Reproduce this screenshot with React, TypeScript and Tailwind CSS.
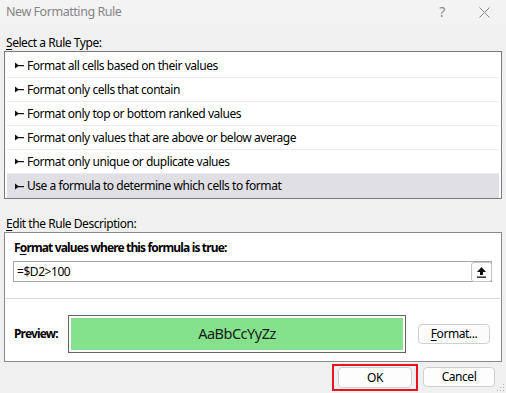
const ruleTypes = [
  'Format all cells based on their values',
  'Format only cells that contain',
  'Format only top or bottom ranked values',
  'Format only values that are above or below average',
  'Format only unique or duplicate values',
  'Use a formula to determine which cells to format',
];

const RowArrow = () => (
  <svg width="10" height="7" viewBox="0 0 10 7" className="shrink-0">
    <polygon points="0,0.5 0,6.5 4,3.5" fill="#111" />
    <rect x="2" y="3" width="7" height="1.2" fill="#111" />
  </svg>
);

const CollapseIcon = () => (
  <svg width="11" height="12" viewBox="0 0 11 12">
    <polygon points="5.5,1 10,6 7,6 7,9 4,9 4,6 1,6" fill="#111" />
    <rect x="1" y="10.5" width="9" height="1.3" fill="#111" />
  </svg>
);

export default function App() {
  return (
    <div className="w-[506px] h-[393px] bg-[#f0f0f0] flex flex-col font-['Segoe_UI','Noto_Sans',sans-serif] text-[12px] tracking-[-0.45px] text-black overflow-hidden relative">
      {/* Title bar */}
      <div className="h-[24px] flex items-center justify-between bg-[#f3f3f3]">
        <span className="pl-[6px] text-[#858585] text-[12.5px] leading-none">New Formatting Rule</span>
        <div className="flex items-center">
          <span className="text-[#8a8a8a] text-[14px] leading-none w-[20px] text-center mr-[27px]">?</span>
          <svg width="11" height="11" viewBox="0 0 11 11" className="mr-[16px]">
            <path d="M0.5 0.5 L10.5 10.5 M10.5 0.5 L0.5 10.5" stroke="#8a8a8a" strokeWidth="1" />
          </svg>
        </div>
      </div>

      {/* Rule type */}
      <div className="mt-[11px] pl-[6px] h-[16px] leading-[16px]">
        <span className="underline underline-offset-2">S</span>elect a Rule Type:
      </div>
      <div className="mx-[4px] w-[498px] border border-[#7a7a7a] bg-white pt-[2px] px-[2px] h-[148px]">
        {ruleTypes.map((label, i) => {
          const selected = i === ruleTypes.length - 1;
          return (
            <div
              key={label}
              className={`h-[24px] flex items-center gap-[2px] pl-[8px] ${
                selected ? 'bg-[#dfdfe4]' : 'border-b border-[#ebebeb]'
              }`}
            >
              <RowArrow />
              <span>{label}</span>
            </div>
          );
        })}
      </div>

      {/* Rule description */}
      <div className="mt-[17px] pl-[6px] h-[16px] leading-[16px]">
        <span className="underline underline-offset-2">E</span>dit the Rule Description:
      </div>
      <div className="mx-[4px] w-[498px] h-[130px] border border-[#8a8a8a] bg-white flex flex-col">
        <div className="pt-[7px] pl-[9px] font-bold tracking-[-0.85px] h-[16px] leading-[16px] box-content">
          F<span className="underline underline-offset-2">o</span>rmat values where this formula is true:
        </div>
        <div className="mt-[5px] ml-[8px] w-[479px] h-[21px] border border-[#a6a6a6] flex items-center justify-between">
          <span className="pl-[3px]">=$D2&gt;100</span>
          <div className="w-[21px] h-[20px] -mr-px border border-[#c4c4c4] rounded-[3px] bg-white flex items-center justify-center">
            <CollapseIcon />
          </div>
        </div>
        <div className="mt-[16px] h-px bg-[#dadada] mr-px" />
        <div className="flex items-center mt-[16px]">
          <span className="pl-[9px] w-[63px] font-bold tracking-[-0.85px]">Preview:</span>
          <div className="w-[338px] h-[38px] border border-[#646464] p-[2px]">
            <div className="w-full h-full bg-[#85e28c] flex items-center justify-center text-[14.5px] tracking-[-0.5px] text-[#1a1a1a]">
              AaBbCcYyZz
            </div>
          </div>
          <div className="ml-[12px] w-[72px] h-[20px] border border-[#d0d0d0] rounded-[4px] bg-[#fbfbfb] flex items-center justify-center">
            <span className="underline underline-offset-2">F</span>ormat...
          </div>
        </div>
      </div>

      {/* Buttons */}
      <div className="flex justify-end mt-[2px] pr-[11px] gap-[5px]">
        <div className="border-2 border-[#e8141c] px-[4px] py-[1px]">
          <div className="w-[74px] h-[21px] border border-[#d0d0d0] rounded-[4px] bg-[#fdfdfd] flex items-center justify-center">
            OK
          </div>
        </div>
        <div className="mt-[3px] w-[72px] h-[20px] border border-[#d0d0d0] rounded-[4px] bg-[#fdfdfd] flex items-center justify-center">
          Cancel
        </div>
      </div>

      {/* resize grip */}
      <svg width="8" height="8" viewBox="0 0 8 8" className="absolute right-[1px] bottom-[1px]">
        <rect x="6" y="0" width="1" height="1" fill="#b8b8b8" />
        <rect x="3" y="3" width="1" height="1" fill="#b8b8b8" />
        <rect x="6" y="3" width="1" height="1" fill="#b8b8b8" />
        <rect x="0" y="6" width="1" height="1" fill="#b8b8b8" />
        <rect x="3" y="6" width="1" height="1" fill="#b8b8b8" />
        <rect x="6" y="6" width="1" height="1" fill="#b8b8b8" />
      </svg>
    </div>
  );
}
